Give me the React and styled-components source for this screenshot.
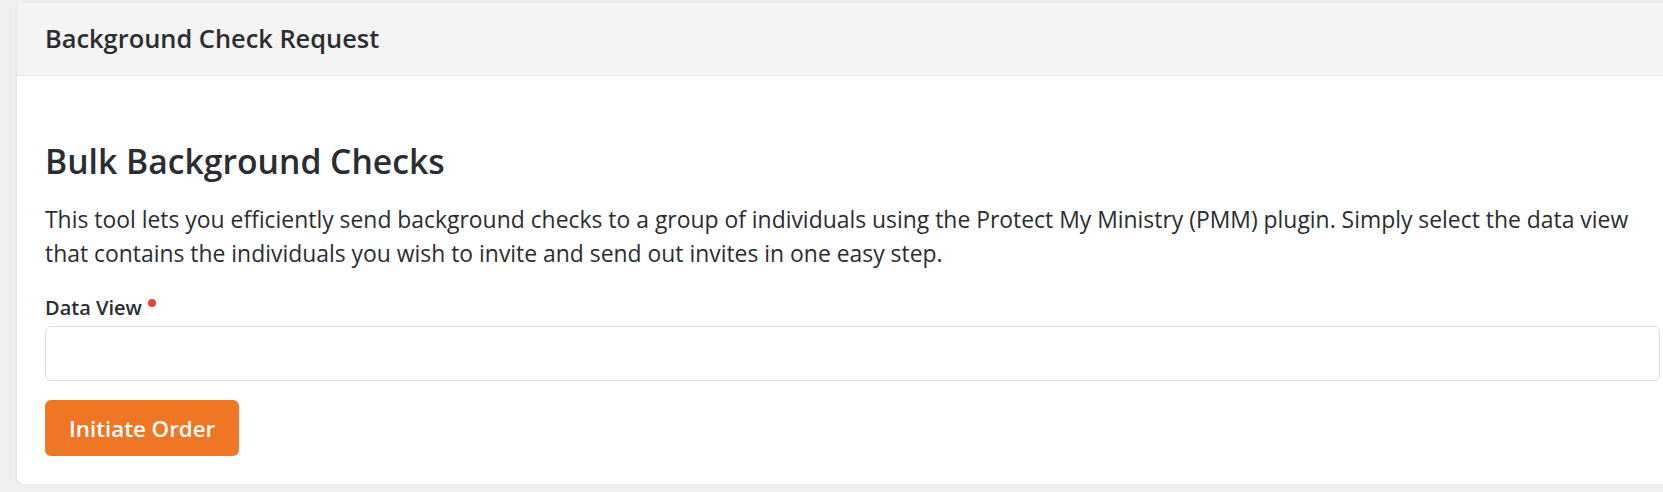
import styled, { createGlobalStyle } from "styled-components";

const GlobalStyle = createGlobalStyle`
  html, body {
    margin: 0;
    padding: 0;
    background: #efefef;
    overflow: hidden;
  }
  body {
    font-family: "Open Sans", "Noto Sans", sans-serif;
    color: #2b2d31;
  }
`;

const Page = styled.div`
  padding: 3px 0 0 17px;
  width: 1671px;
`;

const Card = styled.section`
  background: #fff;
  border-radius: 6px;
  box-shadow: 0 1px 3px rgba(0, 0, 0, 0.12);
  overflow: hidden;
`;

const CardHeader = styled.header`
  height: 72px;
  display: flex;
  align-items: center;
  padding: 0 28px;
  background: #f4f4f4;
  border-bottom: 1px solid #e4e4e4;
`;

const CardTitle = styled.h3`
  margin: 0;
  font-size: 25.4px;
  font-weight: 600;
  line-height: 1.1;
`;

const CardBody = styled.div`
  padding: 28px 28px 28px;
`;

const Heading = styled.h1`
  margin: 39px 0 23px;
  font-size: 33.7px;
  font-weight: 600;
  line-height: 1.1;
`;

const Intro = styled.p`
  margin: 0 0 23px;
  font-size: 22.9px;
  line-height: 34px;
`;

const Field = styled.div`
  display: flex;
  flex-direction: column;
  gap: 4px;
`;

const Label = styled.label`
  font-size: 20px;
  font-weight: 600;
  line-height: 28px;
  display: flex;
  align-items: flex-start;
  gap: 6px;
`;

const Required = styled.span`
  width: 8px;
  height: 8px;
  margin-top: 5px;
  border-radius: 50%;
  background: #df4a35;
`;

const Input = styled.input`
  box-sizing: border-box;
  height: 55px;
  width: 100%;
  border: 1px solid #dcdcdc;
  border-radius: 6px;
  background: #fff;
  padding: 0 16px;
  font: inherit;
  font-size: 22px;
  outline: none;
`;

const Button = styled.button`
  margin-top: 19px;
  height: 56px;
  padding: 0 24px;
  border: none;
  border-radius: 6px;
  background: #ee7624;
  color: #fff;
  font-family: inherit;
  font-size: 22.3px;
  font-weight: 600;
  cursor: pointer;
`;

export default function App() {
  return (
    <Page>
      <GlobalStyle />
      <Card>
        <CardHeader>
          <CardTitle>Background Check Request</CardTitle>
        </CardHeader>
        <CardBody>
          <Heading>Bulk Background Checks</Heading>
          <Intro>
            This tool lets you efficiently send background checks to a group of individuals using the
            Protect My Ministry (PMM) plugin. Simply select the data view that contains the individuals
            you wish to invite and send out invites in one easy step.
          </Intro>
          <Field>
            <Label htmlFor="dataview">
              Data View
              <Required />
            </Label>
            <Input id="dataview" type="text" />
          </Field>
          <Button type="button">Initiate Order</Button>
        </CardBody>
      </Card>
    </Page>
  );
}
